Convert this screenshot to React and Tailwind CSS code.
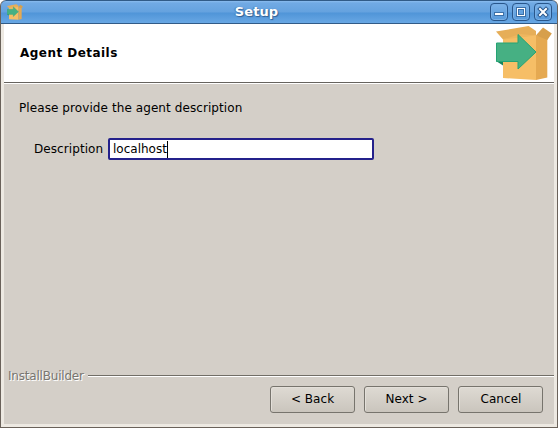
import React from "react";

function BoxIcon({ className }) {
  return (
    <svg viewBox="0 0 56 56" className={className}>
      <path d="M0 6.6 L32.6 1 L40 6 L40 11 L7 14.5 Z" fill="#e6ae58" />
      <path d="M7 14 L40 10 L40 55 L7 53 Z" fill="#f6be66" />
      <path d="M40 10 L51.3 13 L51.3 52.5 L40 55 Z" fill="#e5a951" />
      <path d="M7 14.5 L24 9 L40 10.5 Z" fill="#eeb65f" />
      <path d="M40 10.2 L47 2.6 L55.8 8.4 L51.3 15 Z" fill="#d79f4b" />
      <path d="M0 36 H7 V40.5 Z" fill="#16845c" />
      <path d="M0.5 18 H22 V9.5 L40 27 L22 44 V36.5 H0.5 Z" fill="#46b083" stroke="#25a374" strokeWidth="1" />
    </svg>
  );
}

function WindowButton({ children }) {
  return (
    <div className="h-[18px] w-[18px] rounded-[4px] border border-[#28568b] bg-linear-to-b from-[#7cb3e9] to-[#5799da] shadow-[inset_0_0_0_1px_#78afe6]">
      <svg viewBox="0 0 16 16" className="block h-4 w-4">
        {children}
      </svg>
    </div>
  );
}

function DialogButton({ children }) {
  return (
    <button className="h-[27px] w-[85px] rounded-[3px] border border-[#77746d] bg-linear-to-b from-[#dedad3] to-[#cac5bd] pb-px tracking-[0.04px] shadow-[inset_1px_1px_0_#e3dfd9]">
      {children}
    </button>
  );
}

export default function App() {
  return (
    <div className="h-[428px] w-[558px] bg-white font-['DejaVu_Sans',sans-serif] text-[12px] leading-[16px] text-black">
      <div className="flex h-full flex-col overflow-hidden rounded-t-[6px] border border-t-0 border-[#6a625a] bg-[#ede9e2]">
        <header className="-mx-px flex h-6 shrink-0 items-center rounded-t-[6px] border border-[#315b87] bg-[linear-gradient(to_bottom,#8abcef_0px,#71aae4_2px,#65a2df_11px,#5095d8_12px,#68a7e4_22px)] pr-[5px] pl-[6px]">
          <BoxIcon className="h-4 w-4" />
          <h1 className="flex-1 text-center text-[13px] font-bold tracking-[0.1px] text-white [text-shadow:1px_1px_1px_#315e91,-1px_0_1px_#4479b0]">Setup</h1>
          <div className="flex gap-[4px]">
            <WindowButton>
              <rect x="3" y="8" width="10" height="4" fill="#3c70a8" />
              <rect x="4" y="9" width="8" height="2" fill="white" />
            </WindowButton>
            <WindowButton>
              <rect x="3" y="3" width="10" height="10" fill="#3c70a8" />
              <rect x="4.5" y="4.5" width="7" height="7" fill="#3c70a8" stroke="white" />
              <rect x="6" y="6" width="4" height="4" fill="#65a2df" />
            </WindowButton>
            <WindowButton>
              <path d="M5 5L11 11M11 5L5 11" stroke="#28568b" strokeWidth="4" strokeLinecap="square" />
              <path d="M5 5L11 11M11 5L5 11" stroke="white" strokeWidth="2" strokeLinecap="square" />
            </WindowButton>
          </div>
        </header>
        <main className="mx-[3px] mb-[3px] flex min-h-0 flex-1 flex-col bg-[#d4cfc8]">
          <section className="flex h-[58px] shrink-0 justify-between bg-white pr-[2px] pl-4">
            <h2 className="pt-[21px] font-bold tracking-[0.46px]">Agent Details</h2>
            <BoxIcon className="mt-px h-14 w-14" />
          </section>
          <div className="h-[2px] shrink-0 border-t border-[#66635e] bg-white" />
          <p className="mt-4 ml-[15px] tracking-[0.085px]">Please provide the agent description</p>
          <label className="mt-[22px] ml-[30px] flex items-center">
            <span className="w-[74px] tracking-[0.08px]">Description</span>
            <span className="flex h-[22px] w-[266px] items-center rounded-[2px] border-2 border-[#24218b] bg-white pl-[3px]">
              <span>localhost</span>
              <span className="h-[17px] w-px bg-black" />
            </span>
          </label>
          <footer className="mt-auto mb-[11px]">
            <div className="flex items-center pl-1 text-[#787670]">
              <span className="w-[80px] tracking-[-0.2px] [text-shadow:1px_1px_0_white]">InstallBuilder</span>
              <span className="h-[2px] flex-1 border-t border-[#716e67] bg-white" />
            </div>
            <div className="mt-[2px] mr-[11px] flex justify-end gap-[9px]">
              <DialogButton>&lt; Back</DialogButton>
              <DialogButton>Next &gt;</DialogButton>
              <DialogButton><span className="pl-px">Cancel</span></DialogButton>
            </div>
          </footer>
        </main>
      </div>
    </div>
  );
}
